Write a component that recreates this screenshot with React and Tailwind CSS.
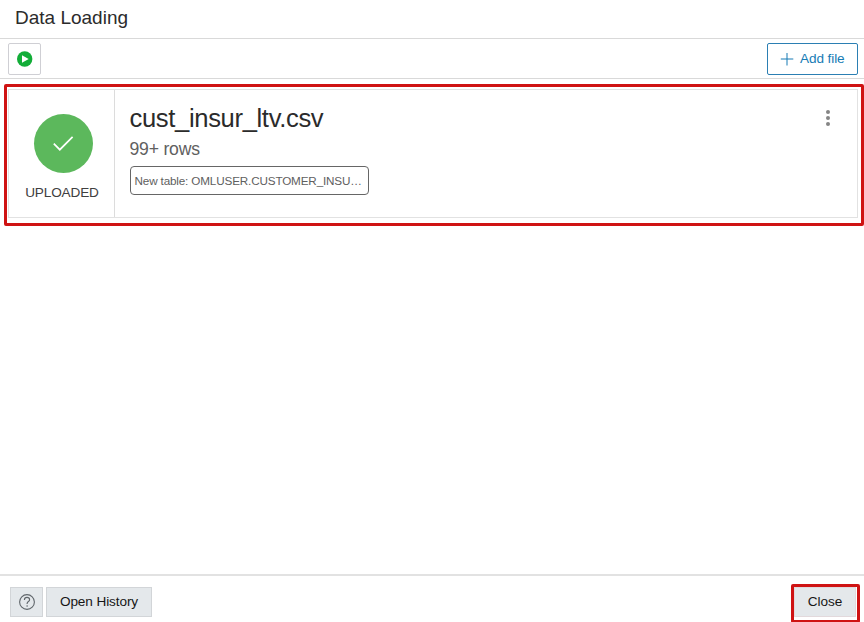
export default function App() {
  return (
    <div className="flex h-[622px] w-[864px] flex-col overflow-hidden bg-white font-['Liberation_Sans',Arial,sans-serif] text-[#2b2b2b]">
      <header className="flex h-[39px] shrink-0 items-start border-b border-[#d9d9d9] pl-[15px] pt-[6px]">
        <h1 className="text-[19px] leading-6">Data Loading</h1>
      </header>

      <div className="flex h-10 shrink-0 items-center justify-between border-b border-[#d9d9d9] pl-2 pr-[6px]">
        <button className="flex h-8 w-[33px] items-center justify-center rounded-[2px] border border-[#cfcfd4]" aria-label="Start">
          <svg width="16" height="16" viewBox="0 0 16 16">
            <circle cx="7.7" cy="8" r="7.7" fill="#12ad38" />
            <path d="M5 4.2v7.6L11.7 8z" fill="#fff" />
          </svg>
        </button>
        <button className="flex h-8 w-[91px] items-center rounded-[2px] border border-[#2b7fb3] pl-3 text-[13.6px] tracking-[-0.1px] text-[#167bb5]">
          <svg className="mr-[6px] shrink-0" width="14" height="14" viewBox="0 0 14 14" stroke="#167bb5" strokeWidth="1">
            <path d="M7 1v12.5M0.8 7h12.5" />
          </svg>
          <span className="whitespace-nowrap pt-px">Add file</span>
        </button>
      </div>

      <main className="flex-1 pl-1 pt-[5px]">
        <section className="h-[142px] rounded-[2px] border-[3px] border-[#cf1313] pb-[5px] pl-px pr-[3px] pt-[2px]">
          <div className="flex h-[129px] border border-[#e2e2e2]">
            <div className="flex w-[106px] shrink-0 flex-col items-center border-r border-[#dcdcdc] pl-[3px] pt-6">
              <div className="flex h-[59px] w-[59px] items-center justify-center rounded-full bg-[#5cb85c]">
                <svg width="22" height="18" viewBox="0 0 22 18" fill="none" stroke="#fff" strokeWidth="1.7">
                  <path d="M1.8 8.6l6 6.1L20.6 1.9" />
                </svg>
              </div>
              <div className="mr-[2px] mt-[10px] text-[13.6px] leading-5 tracking-[-0.15px] text-[#404040]">UPLOADED</div>
            </div>
            <div className="flex min-w-0 flex-1 flex-col pl-[14px] pt-3">
              <h2 className="pl-[0.5px] text-[25.6px] leading-8 tracking-[-0.35px]">cust_insur_ltv.csv</h2>
              <div className="mt-[3px] pl-[0.5px] text-[17.6px] leading-6 tracking-[-0.2px] text-[#606060]">99+ rows</div>
              <div className="ml-[0.5px] mt-[5px] h-[29px] w-[239px] whitespace-nowrap rounded-[4px] border border-[#666] pl-1 text-[11.7px] leading-[27px] tracking-[-0.15px] text-[#606060]">
                New table: OMLUSER.CUSTOMER_INSU…
              </div>
            </div>
            <button className="mr-[26px] mt-5 h-4 w-[6px]" aria-label="Actions">
              <svg width="6" height="16" viewBox="0 0 6 16" fill="#858585">
                <circle cx="3" cy="2" r="2" />
                <circle cx="3" cy="8" r="2" />
                <circle cx="3" cy="14" r="2" />
              </svg>
            </button>
          </div>
        </section>
      </main>

      <footer className="flex h-12 shrink-0 items-start justify-between border-t-2 border-[#e2e2e2] pl-[10px] pr-1 text-[13.6px] tracking-[-0.1px] text-[#161616]">
        <div className="flex gap-[3px] pt-[11px]">
          <button className="flex h-[30px] w-[33px] items-center justify-center border border-[#d2d5d8] bg-[#e4e8eb]" aria-label="Help">
            <svg width="16" height="16" viewBox="0 0 16 16" fill="none" stroke="#60666b" strokeWidth="1.1">
              <circle cx="8" cy="8" r="7.4" />
              <path d="M5.4 6c0-1.6 1-2.6 2.6-2.6s2.6 1 2.6 2.3c0 1.8-2.5 1.9-2.5 3.8v.6M8.1 11.3v1.4" />
            </svg>
          </button>
          <button className="h-[30px] w-[106px] whitespace-nowrap border border-[#d2d5d8] bg-[#e4e8eb]">Open History</button>
        </div>
        <div className="mt-2 h-[39px] w-[69px] rounded-[2px] border-[3px] border-[#cf1313]">
          <button className="block h-[30px] w-[62px] border border-[#e2d9dc] bg-[#e4e8eb]">Close</button>
        </div>
      </footer>
    </div>
  );
}
